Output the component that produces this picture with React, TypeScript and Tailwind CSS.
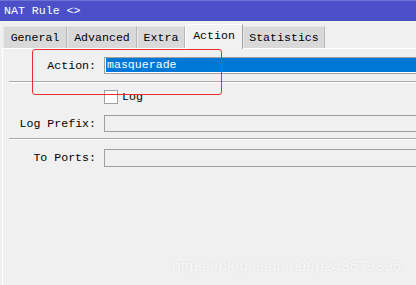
import React from "react";

const mono = { fontFamily: '"Liberation Mono", "DejaVu Sans Mono", monospace' };

function Tab({ label, active, w }: { label: string; active?: boolean; w: string }) {
  if (active) {
    return (
      <div
        className={`${w} h-[25px] bg-[#f2f2f2] border-l border-t border-white border-r border-r-[#a0a0a0] flex items-center justify-center -mb-[1px] relative z-10`}
      >
        <span className="-mt-[2px]">{label}</span>
      </div>
    );
  }
  return (
    <div
      className={`${w} h-[22px] bg-[#d9d9d9] border-l border-t border-[#e8e8e8] border-r border-r-[#b8b8b8] flex items-center justify-center`}
    >
      <span className="mt-[1px]">{label}</span>
    </div>
  );
}

function Row({ label, children }: { label: string; children: React.ReactNode }) {
  return (
    <div className="flex items-center -mr-[20px]">
      <div className="w-[94px] text-right pr-[1px] shrink-0">{label}</div>
      <div className="w-[7px] shrink-0" />
      <div className="flex-1 min-w-0">{children}</div>
    </div>
  );
}

function Sep() {
  return (
    <div className="ml-[6px]">
      <div className="h-[1px] bg-[#a9a9a9]" />
      <div className="h-[1px] bg-white" />
    </div>
  );
}

export default function App() {
  return (
    <div
      className="w-[416px] h-[285px] bg-[#f0f0f0] relative overflow-hidden text-[11.6px] text-black leading-none"
      style={mono}
    >
      {/* title bar */}
      <div className="h-[21px] bg-[#4b50c8] border-t border-[#6d71d4] flex items-center pl-[4px] text-white">
        <span className="-mt-[1px]">NAT Rule &lt;&gt;</span>
      </div>

      {/* tabs */}
      <div className="h-[27px] flex items-end pl-[3px]">
        <Tab label="General" w="w-[64px]" />
        <Tab label="Advanced" w="w-[70px]" />
        <Tab label="Extra" w="w-[48px]" />
        <Tab label="Action" w="w-[58px]" active />
        <Tab label="Statistics" w="w-[82px]" />
      </div>

      {/* panel */}
      <div className="ml-[2px] border-l border-t border-white h-[237px] pt-[8px]">
        <Row label="Action:">
          <div className="h-[17px] border border-[#a0a0a0] bg-white pl-[1px] pb-[1px]">
            <div className="h-full bg-[#0078d7] text-white flex items-center pl-[1px]">
              <span>masquerade</span>
            </div>
          </div>
        </Row>

        <div className="mt-[7px]">
          <Sep />
        </div>

        <div className="flex items-center mt-[7px] pl-[101px]">
          <div className="w-[14px] h-[14px] bg-white border border-[#a0a0a0]" />
          <span className="ml-[4px]">Log</span>
        </div>

        <div className="mt-[11px]">
          <Row label="Log Prefix:">
            <div className="h-[17px] border border-[#a0a0a0] bg-[#f0f0f0]" />
          </Row>
        </div>

        <div className="mt-[6px]">
          <Sep />
        </div>

        <div className="mt-[9px]">
          <Row label="To Ports:">
            <div className="h-[18px] border border-[#a0a0a0] bg-[#f0f0f0]" />
          </Row>
        </div>
      </div>

      {/* red annotation box */}
      <div className="absolute left-[32px] top-[49px] w-[190px] h-[46px] border border-[#e8312f] rounded-[3px]" />

      {/* watermark */}
      <div
        className="absolute left-[172px] top-[258px] text-[15.5px] text-[#f8f8f8]"
        style={{
          fontFamily: '"Liberation Sans", Arial, sans-serif',
          textShadow: "0 0 2px #d8d8d8",
        }}
      >
        https://blog.csdn.net/p243679396
      </div>
    </div>
  );
}
